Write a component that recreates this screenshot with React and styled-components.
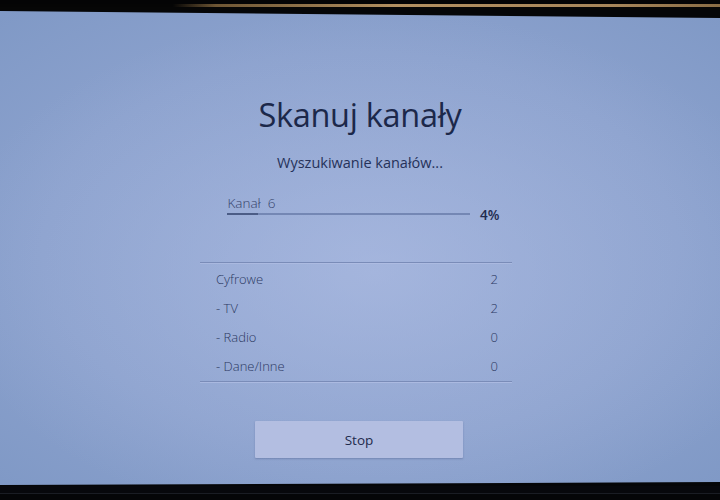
import React from "react";
import styled, { createGlobalStyle } from "styled-components";

const Global = createGlobalStyle`
  html, body { margin: 0; padding: 0; background: #050608; }
  body { font-family: "Open Sans", "Noto Sans", sans-serif; }
`;

const Frame = styled.div`
  width: 720px;
  height: 500px;
  background: #050608;
  display: flex;
  flex-direction: column;
  overflow: hidden;
`;

const TopBezel = styled.div`
  height: 10px;
  flex: none;
  background:
    linear-gradient(to bottom, #040405 0 4px, transparent 4px 7px, #060606 7px 100%),
    linear-gradient(to right, #050505 0%, #050505 24%, #6e5634 30%, #b39060 55%, #a7865a 85%, #8a6d45 100%);
`;

const Screen = styled.div`
  height: 476px;
  flex: none;
  clip-path: polygon(0 1px, 100% 8px, 100% 472px, 0 475px);
  background:
    radial-gradient(ellipse 60% 55% at 52% 55%, rgba(176, 190, 228, 0.6) 0%, rgba(160, 176, 220, 0) 100%),
    radial-gradient(ellipse 80% 75% at 50% 50%, #93a8d3 0%, #8ba1cd 55%, #7d97c4 100%);
  display: flex;
  flex-direction: column;
  align-items: center;
  color: #1e2a4c;
`;

const Title = styled.h1`
  margin: 83px 0 0;
  font-size: 32.5px;
  line-height: 44px;
  font-weight: 400;
  letter-spacing: -0.3px;
  color: #1c284a;
`;

const Subtitle = styled.div`
  margin-top: 16px;
  font-size: 14.5px;
  line-height: 20px;
  color: #26325a;
`;

const Progress = styled.div`
  margin-top: 21px;
  width: 273px;
  margin-left: 6px;
  display: grid;
  grid-template-columns: 1fr auto;
  column-gap: 10px;
`;

const ChannelLabel = styled.div`
  grid-column: 1;
  font-size: 13.5px;
  line-height: 18px;
  font-weight: 300;
  color: #34416a;
  padding-left: 1px;
`;

const Track = styled.div`
  grid-column: 1;
  grid-row: 2;
  height: 2px;
  margin-top: 1px;
  background: #7487b4;
  overflow: hidden;
`;

const Fill = styled.div`
  height: 100%;
  background: #4b5c86;
`;

const Percent = styled.div`
  grid-column: 2;
  grid-row: 1 / span 2;
  align-self: end;
  margin-bottom: -9px;
  font-size: 13.5px;
  line-height: 18px;
  font-weight: 600;
  color: #1e2a4e;
`;

const Table = styled.div`
  margin-top: 47px;
  margin-right: 8px;
  width: 312px;
  border-top: 1px solid #7a8cb8;
  border-bottom: 1px solid #7a8cb8;
  box-shadow: 0 1px 0 rgba(190, 200, 235, 0.5), inset 0 1px 0 rgba(190, 200, 235, 0.4);
  padding: 1px 0;
  display: flex;
  flex-direction: column;
`;

const Row = styled.div`
  height: 29px;
  display: flex;
  align-items: center;
  justify-content: space-between;
  padding: 0 14px 0 16px;
  font-size: 13px;
  font-weight: 300;
  color: #2c3962;
`;

const Button = styled.button`
  margin-top: 39px;
  margin-right: 2px;
  width: 208px;
  height: 37px;
  border: none;
  border-radius: 1px;
  background: #b3bee1;
  box-shadow: 0 1px 2px rgba(60, 75, 120, 0.35);
  font-family: "Open Sans", "Noto Sans", sans-serif;
  font-size: 13.5px;
  color: #1e2a4c;
  cursor: pointer;
`;

const BottomBezel = styled.div`
  flex: 1;
  background: linear-gradient(to bottom, #07080c 0 7px, #1a1d24 7px 8px, #050608 8px);
`;

const rows = [
  ["Cyfrowe", "2"],
  ["- TV", "2"],
  ["- Radio", "0"],
  ["- Dane/Inne", "0"],
];

export default function App() {
  const pct = 4;
  return (
    <>
      <Global />
      <Frame>
        <TopBezel />
        <Screen>
          <Title>Skanuj kanały</Title>
          <Subtitle>Wyszukiwanie kanałów...</Subtitle>
          <Progress>
            <ChannelLabel>Kanał&nbsp;&nbsp;6</ChannelLabel>
            <Track>
              <Fill style={{ width: `${Math.max(pct * 3.2, 2)}%` }} />
            </Track>
            <Percent>{pct}%</Percent>
          </Progress>
          <Table>
            {rows.map(([label, value]) => (
              <Row key={label}>
                <span>{label}</span>
                <span>{value}</span>
              </Row>
            ))}
          </Table>
          <Button>Stop</Button>
        </Screen>
        <BottomBezel />
      </Frame>
    </>
  );
}
